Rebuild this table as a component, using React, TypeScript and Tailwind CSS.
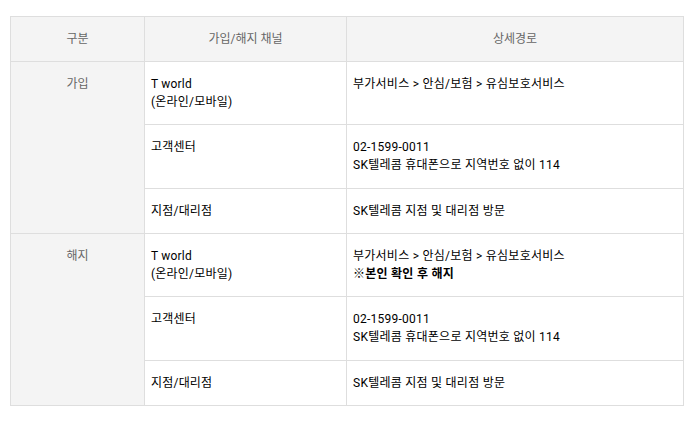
const ROWS = [
  {
    group: '가입',
    items: [
      { channel: ['T world', '(온라인/모바일)'], detail: ['부가서비스 > 안심/보험 > 유심보호서비스'] },
      { channel: ['고객센터'], detail: ['02-1599-0011', 'SK텔레콤 휴대폰으로 지역번호 없이 114'] },
      { channel: ['지점/대리점'], detail: ['SK텔레콤 지점 및 대리점 방문'] },
    ],
  },
  {
    group: '해지',
    items: [
      { channel: ['T world', '(온라인/모바일)'], detail: ['부가서비스 > 안심/보험 > 유심보호서비스'], note: '※본인 확인 후 해지' },
      { channel: ['고객센터'], detail: ['02-1599-0011', 'SK텔레콤 휴대폰으로 지역번호 없이 114'] },
      { channel: ['지점/대리점'], detail: ['SK텔레콤 지점 및 대리점 방문'] },
    ],
  },
];

export default function App() {
  return (
    <div
      className="min-h-[423px] bg-white pt-[16px] pl-[10px]"
      style={{ fontFamily: 'Roboto, "Noto Sans CJK KR", "Noto Sans", sans-serif' }}
    >
      <table className="w-[673px] table-fixed border-collapse text-[12px] leading-[18px]">
        <colgroup>
          <col className="w-[134px]" />
          <col className="w-[202px]" />
          <col className="w-[337px]" />
        </colgroup>
        <thead>
          <tr className="bg-[#f4f4f4] text-[#666]">
            <th className="border border-[#dedede] py-[13px] font-normal">구분</th>
            <th className="border border-[#dedede] py-[13px] font-normal">가입/해지 채널</th>
            <th className="border border-[#dedede] py-[13px] font-normal">상세경로</th>
          </tr>
        </thead>
        <tbody>
          {ROWS.map((g) =>
            g.items.map((item, i) => (
              <tr key={g.group + i}>
                {i === 0 && (
                  <td
                    rowSpan={g.items.length}
                    className="border border-[#dedede] bg-[#f4f4f4] py-[13px] text-center align-top text-[#666]"
                  >
                    {g.group}
                  </td>
                )}
                <td className="border border-[#dedede] px-[6px] py-[13px] align-top tracking-[0.2px] text-[#000]">
                  {item.channel.map((line) => (
                    <div key={line}>{line}</div>
                  ))}
                </td>
                <td
                  className={
                    item.detail.length > 1
                      ? 'border border-[#dedede] px-[6px] pt-[13px] pb-[14px] align-top tracking-[0.25px] text-[#000]'
                      : 'border border-[#dedede] px-[6px] py-[13px] align-top tracking-[0.25px] text-[#000]'
                  }
                >
                  {item.detail.map((line) => (
                    <div key={line}>{line}</div>
                  ))}
                  {item.note && <div className="font-bold">{item.note}</div>}
                </td>
              </tr>
            ))
          )}
        </tbody>
      </table>
    </div>
  );
}
